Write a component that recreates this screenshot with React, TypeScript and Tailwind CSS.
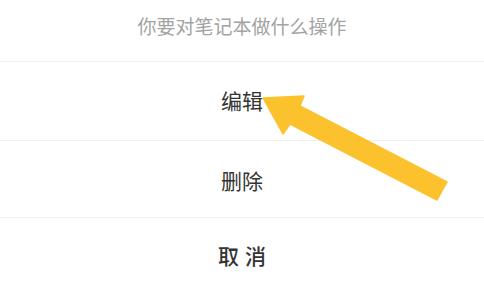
const cjk = { fontFamily: '"Noto Sans CJK SC", "Noto Sans", sans-serif' };

function Arrow() {
    return (
        <svg
            className="absolute left-0 top-0 pointer-events-none"
            width="484"
            height="294"
            viewBox="0 0 484 294"
        >
            <polygon
                points="263,98 304,96 300,106 447,182 437,200 290,124 283,134"
                fill="#fbc22e"
                stroke="#fbc22e"
                strokeWidth="1.5"
                strokeLinejoin="round"
            />
        </svg>
    );
}

export default function App() {
    return (
        <div className="relative w-[484px] h-[294px] overflow-hidden bg-white" style={cjk}>
            {/* title */}
            <div className="h-[62px] flex items-center justify-center border-b border-[#f0f0f0]">
                <span className="text-[19px] text-[#a3a3a3] pb-[8px]">你要对笔记本做什么操作</span>
            </div>

            {/* actions */}
            <div className="h-[79px] flex items-center justify-center border-b border-[#f0f0f0]">
                <span className="text-[21px] text-[#333333]">编辑</span>
            </div>
            <div className="h-[77px] flex items-center justify-center border-b border-[#f0f0f0]">
                <span className="text-[21px] text-[#333333] pt-[3px]">删除</span>
            </div>
            <div className="h-[76px] flex items-center justify-center">
                <span className="text-[21px] text-[#333333] font-medium tracking-[6px] pl-[6px]">取消</span>
            </div>

            <Arrow/>
        </div>
    );
}
